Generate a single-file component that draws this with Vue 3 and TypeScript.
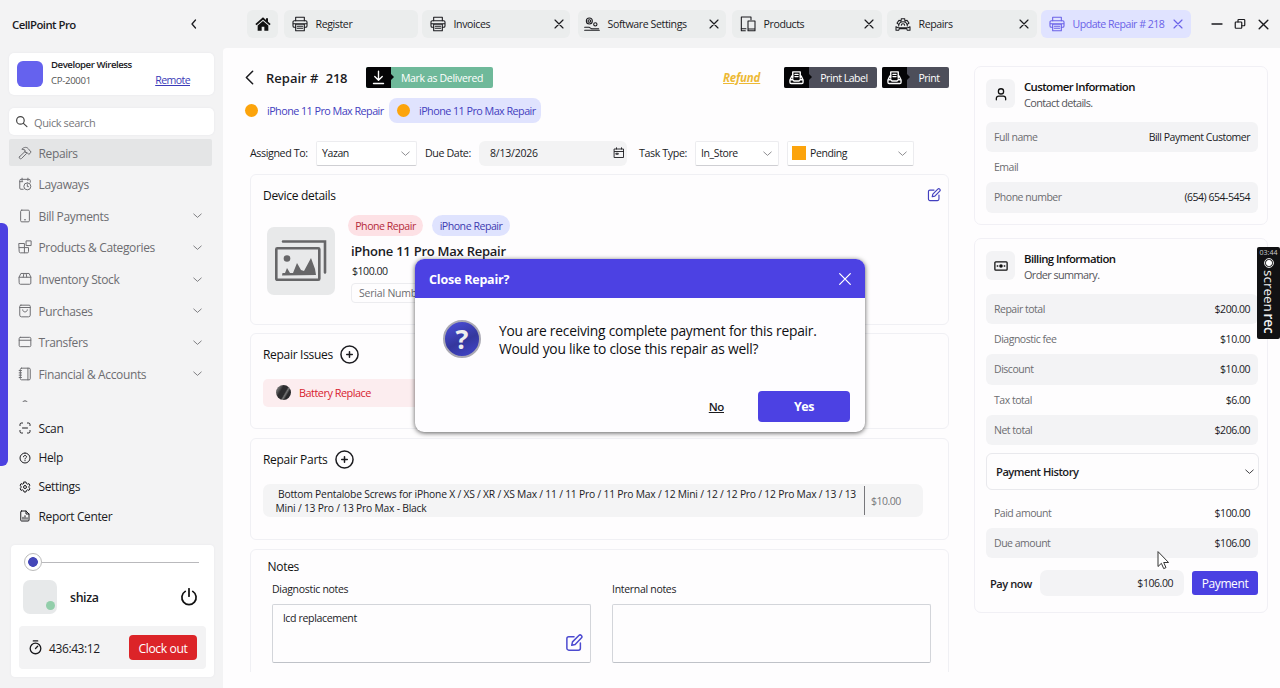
<script setup lang="ts">
import { h } from 'vue'

const icons: Record<string, string[]> = {
  chevronLeft: ['M15 4 8 12l7 8'],
  chevronWide: ['M17 2 7 12l10 10'],
  chevronDown: ['M2 8l10 9 10-9'],
  close: ['M4 4l16 16M20 4 4 20'],
  search: ['M10 3a7 7 0 1 0 0 14 7 7 0 0 0 0-14', 'M15.5 15.5 22 21.500'],
  hammer: ['M2.500 18.500 12 9.500l3 3L6 21.500c-2 1.500-5.500-1-3.500-3Z', 'M7 5c3.500-3.500 8-3.500 10.500-.5l5 6-4 4-2.500-3-4-1V7.500Z'],
  calendarClock: ['M9 21H5a2 2 0 0 1-2-2V6a2 2 0 0 1 2-2h14a2 2 0 0 1 2 2v3', 'M7 2v4M17 2v4M3 8h5', 'M16 10a6 6 0 1 0 0 12 6 6 0 0 0 0-12', 'M16 13v3.500h2'],
  phone: ['M6.500 2h11a2 2 0 0 1 2 2v16a2 2 0 0 1-2 2h-11a2 2 0 0 1-2-2V4a2 2 0 0 1 2-2Z', 'M11 18.500h2'],
  blocks: ['M2 6h9v16H4a2 2 0 0 1-2-2ZM11 13h7v7a2 2 0 0 1-2 2h-5M2 13h9', 'M14.500 1.500h8v8h-8z'],
  box: ['M2 8.500 5 2.500h14l3 6V19a2 2 0 0 1-2 2H4a2 2 0 0 1-2-2Z', 'M2 9h20M9 9l1-6M15 9l-1-6'],
  bag: ['M5 2h14a2 2 0 0 1 2 2v15a3 3 0 0 1-3 3H6a3 3 0 0 1-3-3V4a2 2 0 0 1 2-2Z', 'M3 6h18M8 10c0 5 8 5 8 0'],
  card: ['M4 4h16a2 2 0 0 1 2 2v12a2 2 0 0 1-2 2H4a2 2 0 0 1-2-2V6a2 2 0 0 1 2-2Z', 'M2 9h20'],
  book: ['M6 2h13a2 2 0 0 1 2 2v16a2 2 0 0 1-2 2H6a2 2 0 0 1-2-2V4a2 2 0 0 1 2-2Z', 'M17 2v20M2 6h4M2 10h4M2 14h4M2 18h4'],
  person: ['M12 3a4.500 4.500 0 1 0 0 9 4.500 4.500 0 0 0 0-9', 'M4 22v-2.500a4 4 0 0 1 4-4h8a4 4 0 0 1 4 4V22'],
  scan: ['M2 7V5a3 3 0 0 1 3-3h2M17 2h2a3 3 0 0 1 3 3v2M22 17v2a3 3 0 0 1-3 3h-2M7 22H5a3 3 0 0 1-3-3v-2', 'M7 12h10'],
  help: ['M12 2a10 10 0 1 0 0 20 10 10 0 0 0 0-20', 'M9 9.500c0-4 6.200-3.500 6 .3-.1 2-3 2.200-3 4.200M12 17v.5'],
  gear: ['M10 2h4l.7 3 2.300 1.300 3-1 2 3.500-2.300 2.100v2.200l2.300 2.100-2 3.500-3-1-2.300 1.300-.7 3h-4l-.7-3L7 17.700l-3 1-2-3.500 2.300-2.100v-2.200L2 8.800l2-3.500 3 1L9.300 5Z', 'M12 9a3 3 0 1 0 0 6 3 3 0 0 0 0-6'],
  report: ['M5 2h9l6 6v12a2 2 0 0 1-2 2H5a1.500 1.500 0 0 1-1.500-1.500v-17A1.500 1.500 0 0 1 5 2Z', 'M14 2v6h6M8 18.500v-4M12 18.500v-7M16 18.500v-3'],
  power: ['M7 4.500a9.500 9.500 0 1 0 10 0', 'M12 1v10'],
  timer: ['M12 5a8.500 8.500 0 1 0 0 17 8.500 8.500 0 0 0 0-17', 'M8.500 1.500h7M12 13.500l3.500-3.500'],
  printer: ['M5.500 7V2h13v5', 'M5.500 17H3.500A2 2 0 0 1 1.500 15V9a2 2 0 0 1 2-2h17a2 2 0 0 1 2 2v6a2 2 0 0 1-2 2h-2', 'M5.500 12.500h13V22h-13ZM2 11.500h20M8 15.500h8M8 18.500h8'],
  devices: ['M8 22H2V1.500h14.500v4', 'M12 7.500h10.500V22H12ZM2 19h7M12 19.500h10'],
  repairGear: ['M5.500 15a6.500 6.500 0 0 1 13 0', 'M9 8 9.500 4h5l.5 4 3-1.500 3 4-2.500 2M9 8 6 6.500l-3 4 2.500 2', 'M9.500 14a2.500 2.500 0 0 1 5 0M1.500 16v5.500h4l1-2.500h11l1 2.500h4V16l-3 1.500h-15Z'],
  settingsHand: ['M8 3a4.500 4.500 0 1 0 0 9 4.500 4.500 0 0 0 0-9M8 5.500a2 2 0 1 0 0 4 2 2 0 0 0 0-4', 'M17 10a2.500 2.500 0 1 0 0 5 2.500 2.500 0 0 0 0-5', 'M1 17h7l3 2h11M1 21.500h22'],
  minus: ['M2 12h20'],
  restore: ['M4 8h10a1.500 1.500 0 0 1 1.500 1.500V19a1.500 1.500 0 0 1-1.500 1.500H4A1.500 1.500 0 0 1 2.500 19V9.500A1.500 1.500 0 0 1 4 8Z', 'M8 8V4.500A1.500 1.500 0 0 1 9.500 3H20a1.500 1.500 0 0 1 1.500 1.500V14a1.500 1.500 0 0 1-1.500 1.500h-4.500'],
  download: ['M12 2v14M6 10.500l6 6 6-6M4 21.500h16'],
  label: ['M6 13V3h12v10M9.500 7h5M9.500 10.500h5', 'M6 9.500H4.500l-3 6.500v3.500a2 2 0 0 0 2 2h17a2 2 0 0 0 2-2V16l-3-6.500H18M2 15.500h4l2 2h8l2-2h4'],
  calendar: ['M3 4h18v17H3ZM3 9h18M7 1.500V4M17 1.500V4', 'M6.500 12.500h4v2h-4z'],
  edit: ['M12 3.500H5a2.500 2.500 0 0 0-2.500 2.500v13A2.500 2.500 0 0 0 5 21.500h13a2.500 2.500 0 0 0 2.500-2.500v-7', 'M10 10.500 18.500 2a2 2 0 0 1 3.300 3.300L13.500 14l-4.500 1Z'],
  plus: ['M12 1.200a10.800 10.800 0 1 0 0 21.600 10.800 10.800 0 0 0 0-21.600', 'M12 8.500v7M8.500 12h7'],
  money: ['M3 5h18a1.500 1.500 0 0 1 1.500 1.500v11A1.500 1.500 0 0 1 21 19H3a1.500 1.500 0 0 1-1.500-1.500v-11A1.500 1.500 0 0 1 3 5Z', 'M12 10a2 2 0 1 0 0 4 2 2 0 0 0 0-4M12 11.500v1M5.500 12h1M17.500 12h1'],
}

const Icon = (props: { name: string }) =>
  h('svg', { viewBox: '0 0 24 24' }, icons[props.name].map((d) => h('path', { d })))

const tabs = [
  { label: 'Register', icon: 'printer', cls: 't-register', closable: false },
  { label: 'Invoices', icon: 'printer', cls: 't-invoices', closable: true },
  { label: 'Software Settings', icon: 'settingsHand', cls: 't-software', closable: true },
  { label: 'Products', icon: 'devices', cls: 't-products', closable: true },
  { label: 'Repairs', icon: 'repairGear', cls: 't-repairs', closable: true },
  { label: 'Update Repair # 218', icon: 'printer', cls: 't-active', closable: true },
]

const nav = [
  { label: 'Repairs', icon: 'hammer', more: false },
  { label: 'Layaways', icon: 'calendarClock', more: false },
  { label: 'Bill Payments', icon: 'phone', more: true },
  { label: 'Products & Categories', icon: 'blocks', more: true },
  { label: 'Inventory Stock', icon: 'box', more: true },
  { label: 'Purchases', icon: 'bag', more: true },
  { label: 'Transfers', icon: 'card', more: true },
  { label: 'Financial & Accounts', icon: 'book', more: true },
  { label: 'Partners & Management', icon: 'person', more: false },
]

const links = [
  { label: 'Scan', icon: 'scan' },
  { label: 'Help', icon: 'help' },
  { label: 'Settings', icon: 'gear' },
  { label: 'Report Center', icon: 'report' },
]

const customer = [
  ['Full name', 'Bill Payment Customer'],
  ['Email', ''],
  ['Phone number', '(654) 654-5454'],
]

const billing = [
  ['Repair total', '$200.00'],
  ['Diagnostic fee', '$10.00'],
  ['Discount', '$10.00'],
  ['Tax total', '$6.00'],
  ['Net total', '$206.00'],
]
</script>

<template>
  <div class="app">
    <aside class="sidebar">
      <div class="brand"><span>CellPoint Pro</span><Icon name="chevronLeft" class="i-collapse" /></div>
      <div class="company">
        <div class="logo"></div>
        <div class="company-text"><strong>Developer Wireless</strong><span>CP-20001</span></div>
        <a class="remote">Remote</a>
      </div>
      <div class="search"><Icon name="search" class="i-search" /><span>Quick search</span></div>
      <nav class="nav">
        <div v-for="(n, i) in nav" :key="n.label" class="nav-row" :class="{ on: i === 0 }">
          <Icon :name="n.icon" class="i-nav" /><span>{{ n.label }}</span>
          <Icon v-if="n.more" name="chevronDown" class="i-more" />
        </div>
      </nav>
      <div class="links">
        <div v-for="l in links" :key="l.label" class="link"><Icon :name="l.icon" class="i-link" /><span>{{ l.label }}</span></div>
      </div>
      <div class="user-card">
        <div class="slider"><i class="knob"></i><i class="track"></i></div>
        <div class="user">
          <div class="avatar"><i></i></div>
          <span>shiza</span>
          <Icon name="power" class="i-power" />
        </div>
        <div class="clock"><Icon name="timer" class="i-timer" /><span>436:43:12</span><button>Clock out</button></div>
      </div>
    </aside>

    <div class="main">
      <header class="topbar">
        <div class="tab home">
          <svg viewBox="0 0 24 24" class="i-home"><path d="M12 2 0.500 12l1.800 2L12 5.800 21.700 14l1.800-2L19.500 8.500V3.500h-3v2.400Z" /><path d="M12 7.500 4 14.200V22h6v-6h4v6h6v-7.800Z" /></svg>
        </div>
        <div v-for="t in tabs" :key="t.cls" class="tab" :class="t.cls">
          <Icon :name="t.icon" class="i-tab" /><span>{{ t.label }}</span>
          <Icon v-if="t.closable" name="close" class="i-close" />
        </div>
        <div class="window-controls">
          <Icon name="minus" class="i-min" /><Icon name="restore" class="i-restore" /><Icon name="close" class="i-win-close" />
        </div>
      </header>

      <div class="content">
        <section class="center">
          <div class="title-row">
            <Icon name="chevronWide" class="i-back" />
            <h1>Repair # <b>218</b></h1>
            <button class="split green"><span class="cap"><Icon name="download" class="i-cap" /></span><span class="txt">Mark as Delivered</span></button>
            <a class="refund">Refund</a>
            <button class="split dark label-btn"><span class="cap"><Icon name="label" class="i-cap" /></span><span class="txt">Print Label</span></button>
            <button class="split dark print-btn"><span class="cap"><Icon name="label" class="i-cap" /></span><span class="txt">Print</span></button>
          </div>
          <div class="chips">
            <div class="chip"><i></i>iPhone 11 Pro Max Repair</div>
            <div class="chip current"><i></i>iPhone 11 Pro Max Repair</div>
          </div>
          <div class="filters">
            <label class="l-assigned">Assigned To:</label>
            <div class="select s-assigned"><span>Yazan</span><Icon name="chevronDown" class="i-sel" /></div>
            <label class="l-due">Due Date:</label>
            <div class="date"><span>8/13/2026</span><Icon name="calendar" class="i-cal" /></div>
            <label class="l-type">Task Type:</label>
            <div class="select s-type"><span>In_Store</span><Icon name="chevronDown" class="i-sel" /></div>
            <div class="select s-status"><i class="swatch"></i><span>Pending</span><Icon name="chevronDown" class="i-sel" /></div>
          </div>

          <div class="card device">
            <div class="card-head"><h2>Device details</h2><Icon name="edit" class="i-edit" /></div>
            <div class="device-body">
              <div class="thumb">
                <svg viewBox="0 0 52 42"><path d="M8 1.500h42v31" fill="none" stroke="#666668" stroke-width="2.600" /><rect x="1.300" y="8.300" width="43" height="31.500" rx="1" fill="none" stroke="#666668" stroke-width="2.600" /><circle cx="12" cy="18.500" r="3.300" fill="#666668" /><path d="M7 35.500 7.500 33l2.500 0 2-5 3 5 3 0 4-10 4 7 3 1 7-13 4 11 1 6Z" fill="#666668" /></svg>
              </div>
              <div class="device-info">
                <div class="badges"><span class="badge red">Phone Repair</span><span class="badge blue">iPhone Repair</span></div>
                <h3>iPhone 11 Pro Max Repair</h3>
                <div class="price">$100.00</div>
                <div class="serial">Serial Number</div>
              </div>
            </div>
          </div>

          <div class="card issues">
            <div class="card-head"><h2>Repair Issues</h2><Icon name="plus" class="i-plus" /></div>
            <div class="issue"><i></i>Battery Replace</div>
          </div>

          <div class="card parts">
            <div class="card-head"><h2>Repair Parts</h2><Icon name="plus" class="i-plus" /></div>
            <div class="part">
              <p>&nbsp;Bottom Pentalobe Screws for iPhone X / XS / XR / XS Max / 11 / 11 Pro / 11 Pro Max / 12 Mini / 12 / 12 Pro / 12 Pro Max / 13 / 13<br />Mini / 13 Pro / 13 Pro Max - Black</p>
              <span>$10.00</span>
            </div>
          </div>

          <div class="card notes">
            <h2>Notes</h2>
            <div class="note-grid">
              <div><label>Diagnostic notes</label><div class="note">lcd replacement<Icon name="edit" class="i-note-edit" /></div></div>
              <div><label>Internal notes</label><div class="note"></div></div>
            </div>
          </div>
        </section>

        <section class="side">
          <div class="panel customer">
            <div class="panel-head">
              <div class="panel-icon"><Icon name="person" class="i-person" /></div>
              <div><h4>Customer Information</h4><p>Contact details.</p></div>
            </div>
            <div v-for="(r, i) in customer" :key="r[0]" class="row" :class="{ shade: i % 2 === 0 }"><span>{{ r[0] }}</span><b>{{ r[1] }}</b></div>
          </div>
          <div class="panel billing">
            <div class="panel-head">
              <div class="panel-icon"><Icon name="money" class="i-money" /></div>
              <div><h4>Billing Information</h4><p>Order summary.</p></div>
            </div>
            <div v-for="(r, i) in billing" :key="r[0]" class="row" :class="{ shade: i % 2 === 0 }"><span>{{ r[0] }}</span><b>{{ r[1] }}</b></div>
            <div class="history"><span>Payment History</span><Icon name="chevronDown" class="i-hist" /></div>
            <div class="row"><span>Paid amount</span><b>$100.00</b></div>
            <div class="row shade"><span>Due amount</span><b>$106.00</b></div>
            <div class="pay"><span>Pay now</span><div class="amount">$106.00</div><button>Payment</button></div>
          </div>
        </section>
      </div>
    </div>

    <div class="edge-bar"></div>

    <div class="dialog">
      <div class="dialog-head"><span>Close Repair?</span><Icon name="close" class="i-dlg-close" /></div>
      <div class="dialog-body">
        <div class="question">?</div>
        <p>You are receiving complete payment for this repair.<br />Would you like to close this repair as well?</p>
      </div>
      <div class="dialog-foot"><a>No</a><button>Yes</button></div>
    </div>

    <div class="recorder"><small>03:44</small><i></i><div class="rec-name">screen <b>rec</b></div></div>

    <svg class="cursor" viewBox="0 0 12 19"><path d="M1 1v14.500l3.400-3.200 2.300 5.300 2.300-1-2.300-5.100h4.500Z" fill="#fff" stroke="#333" stroke-width="1" /></svg>
  </div>
</template>

<style>
body { margin: 0; overflow: hidden; }
</style>

<style scoped>
* { box-sizing: border-box; }
.app { position: relative; width: 1280px; height: 688px; display: flex; overflow: hidden; background: #f3f3f4; color: #1b1b1f; font-family: "Open Sans", "Noto Sans", sans-serif; font-size: 11px; letter-spacing: -0.4px; white-space: nowrap; }
svg { display: block; flex: none; fill: none; stroke: currentColor; stroke-width: 1.7; stroke-linecap: round; stroke-linejoin: round; }
button { border: 0; padding: 0; margin: 0; font: inherit; letter-spacing: inherit; color: #fff; }
h1, h2, h3, h4, p { margin: 0; font-weight: 400; }

/* sidebar */
.sidebar { width: 223px; height: 688px; flex: none; padding-left: 9px; display: flex; flex-direction: column; }
.brand { height: 53px; padding: 0 23px 5px 3px; display: flex; align-items: center; justify-content: space-between; font-size: 11.4px; font-weight: 600; letter-spacing: -0.55px; }
.i-collapse { width: 12px; height: 12px; stroke-width: 2.6; }
.company { width: 205px; height: 42px; background: #fff; border-radius: 5px; box-shadow: 0 0 2px #e4e4e8; display: flex; align-items: center; padding: 0 24px 0 8px; }
.logo { width: 26px; height: 26px; border-radius: 6px; background: #6562ee; }
.company-text { margin-left: 8px; flex: 1; display: flex; flex-direction: column; font-size: 9.6px; line-height: 16px; letter-spacing: -0.3px; margin-top: -3px; }
.company-text strong { font-weight: 600; font-size: 9.6px; letter-spacing: -0.45px; }
.company-text span { color: #555; }
.remote { color: #3b3bb8; text-decoration: underline; margin-top: 12px; font-size: 10.6px; letter-spacing: -0.6px; }
.search { width: 205px; height: 27px; margin-top: 13px; background: #fff; border-radius: 5px; box-shadow: 0 0 2px #e4e4e8; display: flex; align-items: center; padding-left: 6px; color: #77777b; padding-top: 1px; }
.i-search { width: 13px; height: 13px; margin-right: 6px; color: #444; stroke-width: 2.2; margin-top: -2px; }
.nav { margin-top: 4px; height: 263px; overflow: hidden; color: #6d6d71; font-size: 12px; letter-spacing: -0.37px; }
.nav-row { width: 203px; height: 27px; margin-bottom: 4.65px; padding: 0 10px 0 9px; display: flex; align-items: center; border-radius: 2px; }
.nav-row span { padding-top: 1px; }
.nav-row.on { background: #e4e5e6; }
.i-nav { width: 14px; height: 14px; margin-right: 6.5px; }
.i-more { width: 9px; height: 9px; margin-left: auto; stroke-width: 2.3; }
.links { margin-top: 11.500px; height: 118px; font-size: 12px; letter-spacing: -0.37px; }
.link { height: 29.4px; display: flex; align-items: center; padding-left: 10px; }
.i-link { width: 12px; height: 12px; margin-right: 7.5px; stroke-width: 2; }
.user-card { width: 203px; height: 132px; margin: 13.500px 0 0 2px; background: #fff; border-radius: 4px; box-shadow: 0 0 2px #e4e4e8; padding: 8px 8px 0; }
.slider { display: flex; align-items: center; height: 18px; padding: 0 7px 0 5px; }
.knob { width: 18px; height: 18px; border: 1px solid #bbb; border-radius: 50%; background: radial-gradient(circle, #4447b8 0 4.500px, #fff 5.200px); }
.track { flex: 1; height: 1px; background: #b9b9bc; }
.user { display: flex; align-items: center; height: 34px; margin-top: 9px; padding: 0 8px 0 4px; font-size: 12.4px; font-weight: 600; }
.avatar { width: 34px; height: 34px; border-radius: 7px; background: #e7e9ea; margin-right: 13px; display: flex; align-items: flex-end; justify-content: flex-end; padding: 4px 2px; }
.avatar i { width: 9px; height: 9px; border-radius: 50%; background: #92ceaa; }
.i-power { width: 18px; height: 18px; margin-left: auto; stroke-width: 2.3; color: #111; }
.clock { margin-top: 12px; width: 187px; height: 43px; background: #f3f3f4; border-radius: 4px; padding: 0 9px; display: flex; align-items: center; font-size: 12px; }
.clock > span { padding-top: 1px; }
.i-timer { width: 15px; height: 17px; margin-right: 6px; stroke-width: 2.1; }
.clock button { margin-left: auto; width: 68px; height: 25px; border-radius: 4px; background: #dc2428; font-size: 12.2px; padding-top: 1px; }

/* top bar */
.main { flex: 1; min-width: 0; }
.topbar { height: 48px; display: flex; align-items: center; padding: 0 0 0 24px; }
.tab { height: 28px; border-radius: 6px; background: #ebeded; display: flex; align-items: center; padding: 0 6px 0 8px; font-size: 10.6px; letter-spacing: -0.4px; flex: none; }
.home { width: 31px; margin-right: 6px; padding: 0; justify-content: center; }
.i-home { width: 16px; height: 16px; fill: #111; stroke: none; }
.i-tab { width: 16px; height: 16px; margin-right: 7.5px; stroke-width: 1.6; }
.i-close { width: 12px; height: 12px; margin-left: auto; stroke-width: 2.3; }
.t-register { width: 134px; margin-right: 4px; }
.t-invoices { width: 148px; margin-right: 8px; padding-right: 5px; }
.t-software { width: 148px; margin-right: 6px; padding-left: 6px; }
.t-products { width: 150px; margin-right: 5px; padding-right: 7px; }
.t-repairs { width: 150px; margin-right: 4px; padding-right: 7px; }
.t-active { width: 150px; background: #e0e3ff; color: #6a62e8; padding-right: 7px; letter-spacing: -0.5px; }
.window-controls { display: flex; align-items: center; margin-left: 20px; }
.i-min { width: 12px; height: 12px; stroke-width: 2.6; }
.i-restore { width: 12px; height: 12px; margin-left: 11px; stroke-width: 2.4; }
.i-win-close { width: 13px; height: 13px; margin-left: 11px; stroke-width: 2.6; }

/* content */
.content { height: 640px; background: #fefdfe; border-radius: 4px 0 0 0; display: flex; overflow: hidden; }
.center { width: 726px; flex: none; padding-left: 27px; height: 624px; overflow: hidden; }
.title-row { height: 21px; margin: 19px 0 0 -7px; display: flex; align-items: center; }
.i-back { width: 15px; height: 15px; margin-right: 9px; margin-left: -1px; stroke-width: 2.5; }
h1 { width: 100px; font-size: 13px; font-weight: 600; letter-spacing: 0; }
h1 b { font-weight: 600; margin-left: 4px; letter-spacing: -0.3px; }
.split { height: 21px; display: flex; align-items: stretch; border-radius: 2px; overflow: hidden; font-size: 10.500px; letter-spacing: -0.35px; }
.cap { position: relative; width: 25px; background: #050507; display: flex; align-items: center; justify-content: center; }
.cap::after { content: ""; position: absolute; left: 25px; top: 7px; border: 3.500px solid transparent; border-left: 3.500px solid #050507; border-right: 0; }
.txt { flex: 1; display: flex; align-items: center; justify-content: center; padding-left: 0; }
.green { width: 127px; background: #6fb99a; }
.dark { background: #4d4e5a; }
.dark .txt { padding-left: 2px; letter-spacing: -0.45px; }
.i-cap { width: 15px; height: 15px; stroke-width: 2.2; }
.refund { margin-left: auto; width: 61px; color: #edb935; font-size: 11.5px; font-weight: 700; font-style: italic; text-decoration: underline; letter-spacing: -0.2px; }
.label-btn { width: 93px; margin-right: 5px; }
.print-btn { width: 67px; }
.chips { height: 25px; margin: 9.500px 0 0 -6px; display: flex; color: #4340bf; font-size: 10.8px; }
.chip { display: flex; align-items: center; width: 145px; padding-left: 1px; letter-spacing: -0.55px; }
.chip i { width: 13px; height: 13px; border-radius: 50%; background: #fca40c; margin-right: 9px; }
.chip.current { width: 152px; background: #e0e3fe; border-radius: 8px; padding-left: 8px; }
.filters { height: 25px; margin-top: 18px; display: flex; align-items: center; font-size: 10.700px; }
.select { height: 25px; background: #fff; border: 1px solid #ececef; border-bottom-color: #cfcfd3; border-radius: 2px; display: flex; align-items: center; padding: 0 6px 0 5px; font-size: 10.500px; }
.i-sel { width: 9px; height: 9px; margin-left: auto; color: #77777b; stroke-width: 2.2; }
.l-assigned { width: 66px; }
.s-assigned { width: 101px; margin-right: 8px; }
.l-due { width: 54px; }
.date { width: 148px; height: 25px; border-radius: 6px; background: #f3f3f4; display: flex; align-items: center; padding: 0 2px 0 11px; margin-right: 12px; letter-spacing: -0.2px; font-size: 10.500px; }
.i-cal { width: 12px; height: 12px; margin-left: auto; stroke-width: 1.8; }
.l-type { width: 56px; }
.s-type { width: 84px; margin-right: 8px; }
.s-status { width: 127px; padding-left: 4px; }
.swatch { width: 14px; height: 14px; background: #fca40c; margin-right: 4px; }
.card { width: 699px; border: 1px solid #f0f0f4; border-radius: 6px; background: #fefdfe; padding: 0 12px; }
.card-head { display: flex; align-items: center; }
h2 { font-size: 12px; font-weight: 500; letter-spacing: -0.3px; color: #111; }
.device { height: 151px; margin-top: 8.5px; padding-top: 11px; }
.device .card-head { height: 18px; justify-content: space-between; margin-right: -5px; }
.i-edit { width: 14px; height: 14px; color: #4340bf; stroke-width: 2; }
.device-body { display: flex; padding: 11px 0 0 4px; }
.thumb { width: 68px; height: 68px; margin-top: 12px; border-radius: 7px; background: #e8e9ea; display: flex; align-items: center; justify-content: center; }
.thumb svg { width: 52px; height: 42px; stroke: none; stroke-linejoin: miter; }
.device-info { margin-left: 16px; }
.badges { display: flex; gap: 9px; margin-left: -3px; }
.badge { height: 21px; border-radius: 11px; display: flex; align-items: center; justify-content: center; font-size: 10.600px; letter-spacing: -0.48px; }
.badge.red { width: 75px; background: #fde1e5; color: #b52b3b; }
.badge.blue { width: 78px; background: #dfe3fe; color: #403bb0; }
h3 { font-size: 13px; line-height: 18px; margin-top: 6px; font-weight: 600; letter-spacing: -0.25px; }
.price { line-height: 14px; margin-top: 4px; font-size: 10.600px; letter-spacing: -0.5px; padding-left: 1px; }
.serial { width: 90px; height: 20px; margin-top: 5px; border: 1px solid #ececef; border-radius: 4px; padding-left: 7px; line-height: 18px; color: #6d6d71; font-size: 10.500px; letter-spacing: -0.2px; }
.issues { height: 96px; margin-top: 8px; padding-top: 11px; }
.i-plus { width: 19px; height: 19px; margin-left: 7.500px; stroke-width: 1.9; }
.issue { margin-top: 14.500px; width: 500px; height: 28px; border-radius: 5px; background: #fcedef; color: #d8232f; display: flex; align-items: center; padding-left: 13px; font-size: 10.9px; letter-spacing: -0.5px; }
.issue i { width: 15px; height: 15px; border-radius: 50%; margin-right: 8px; background: linear-gradient(120deg, #666 0 20%, #2c2c2e 35% 55%, #777 62%, #2a2a2c 72%); }
.parts { height: 102px; margin-top: 9px; padding-top: 10.5px; }
.part { margin-top: 15px; width: 660px; height: 33px; border-radius: 7px; background: #f4f4f5; display: flex; align-items: center; padding-left: 12.5px; }
.part p { width: 588.5px; font-size: 10.300px; line-height: 14px; letter-spacing: -0.21px; padding-top: 1px; }
.part span { height: 29px; line-height: 30px; border-left: 1px solid #77777b; padding-left: 6px; color: #77777b; font-size: 10.500px; letter-spacing: -0.5px; }
.notes { height: 140px; margin-top: 9px; padding: 8px 16.5px; }
.notes h2 { line-height: 17px; }
.note-grid { display: grid; grid-template-columns: 319px 319px; gap: 21px; margin: 6px 0 0 4.5px; }
.note-grid label { display: block; line-height: 16px; font-size: 10.500px; letter-spacing: -0.3px; }
.note { position: relative; height: 59px; margin-top: 7px; border: 1px solid #d3d5da; border-bottom-color: #bfc2c8; border-radius: 2px; padding: 6px 10px; font-size: 10.600px; letter-spacing: -0.37px; }
.i-note-edit { position: absolute; right: 7px; bottom: 10px; width: 18px; height: 18px; color: #4d4bd0; stroke-width: 2; }

/* right column */
.side { margin-left: 25px; width: 294px; padding-top: 18px; }
.panel { border: 1px solid #f1f0f5; border-radius: 7px; padding: 0 9px 0 11px; }
.customer { height: 159px; padding-top: 12px; }
.billing { height: 375px; margin-top: 13px; padding-top: 12px; }
.panel-head { display: flex; height: 42.7px; color: #111; }
.panel-icon { width: 29px; height: 29px; border-radius: 6px; background: #f3f3f5; margin: 0 9px 0 0; display: flex; align-items: center; justify-content: center; }
h4 { font-size: 11.400px; line-height: 16px; font-weight: 600; letter-spacing: -0.6px; }
.panel-head p { color: #55555a; line-height: 16px; font-size: 10.9px; letter-spacing: -0.6px; }
.i-person { width: 14px; height: 14px; stroke-width: 2.2; }
.i-money { width: 14px; height: 14px; stroke-width: 2.2; }
.row { height: 30.300px; border-radius: 6px; display: flex; justify-content: space-between; align-items: center; padding: 0 8px; font-size: 10.500px; letter-spacing: -0.48px; }
.row.shade { background: #f3f3f5; }
.row span { color: #6d6d71; }
.row b { font-weight: 400; color: #1b1b1f; }
.history { height: 37px; margin: 8px -1px 7.500px 0; border: 1px solid #e9e9ed; border-radius: 6px; display: flex; align-items: center; justify-content: space-between; padding: 0 4px 0 9px; font-weight: 600; font-size: 11.200px; letter-spacing: -0.5px; }
.i-hist { width: 9px; height: 9px; stroke-width: 2.200; }
.pay { display: flex; align-items: center; height: 26px; margin-top: 12px; padding-left: 4px; font-size: 11.100px; font-weight: 600; letter-spacing: -0.45px; }
.pay > span { width: 50px; }
.amount { width: 144px; height: 26px; border-radius: 7px; background: #f3f3f5; text-align: right; padding-right: 11px; line-height: 26px; font-size: 10.500px; font-weight: 500; }
.pay button { width: 66px; height: 24px; margin-left: 8px; border-radius: 3px; background: #4a40e2; font-size: 12px; font-weight: 500; letter-spacing: -0.4px; }

/* overlays */
.edge-bar { position: absolute; left: 0; top: 223px; width: 8px; height: 243px; background: #4c41e1; border-radius: 0 6px 6px 0; }
.dialog { position: absolute; left: 415px; top: 259px; width: 450px; height: 173px; background: #fefdff; border-radius: 9px; overflow: hidden; box-shadow: 0 1px 5px rgba(0, 0, 0, 0.65); }
.dialog-head { height: 39px; background: #4c41e3; color: #fff; display: flex; align-items: center; justify-content: space-between; padding: 2px 12px 0 14px; font-size: 12.500px; font-weight: 700; letter-spacing: -0.2px; }
.i-dlg-close { width: 16px; height: 16px; stroke-width: 1.9; margin-top: -2px; }
.dialog-body { display: flex; padding: 22px 0 0 28px; height: 93px; }
.question { width: 38px; height: 38px; border-radius: 50%; border: 2px solid #aaa9b4; background: linear-gradient(155deg, #4d50dd, #34379d 55%, #4347ce); color: #eee; text-align: center; line-height: 34px; font-size: 27px; font-weight: 700; letter-spacing: 0; }
.dialog-body p { margin-left: 18px; padding-top: 1.5px; font-size: 13.800px; line-height: 18.700px; color: #0f0f12; letter-spacing: -0.23px; }
.dialog-foot { display: flex; align-items: center; justify-content: flex-end; padding-right: 15px; font-weight: 600; font-size: 11.500px; }
.dialog-foot a { text-decoration: underline; margin-right: 34px; }
.dialog-foot button { width: 92px; height: 31px; border-radius: 4px; background: #4c41e3; font-size: 12.500px; font-weight: 700; }
.recorder { position: absolute; right: 0; top: 247px; width: 23px; height: 92px; background: #111113; border-radius: 2px; color: #f2f2f2; display: flex; flex-direction: column; align-items: center; }
.recorder small { font-size: 7px; line-height: 11px; letter-spacing: 0; color: #ccc; }
.recorder i { width: 10px; height: 10px; border-radius: 50%; border: 1px solid #ddd; background: radial-gradient(circle, #fff 0 2.500px, #333 3.500px); }
.rec-name { writing-mode: vertical-rl; font-size: 13.5px; line-height: 20px; margin-top: 2px; letter-spacing: 0; word-spacing: -2px; }
.rec-name b { font-weight: 600; }
.cursor { position: absolute; left: 1157px; top: 551px; width: 12px; height: 19px; }
</style>
